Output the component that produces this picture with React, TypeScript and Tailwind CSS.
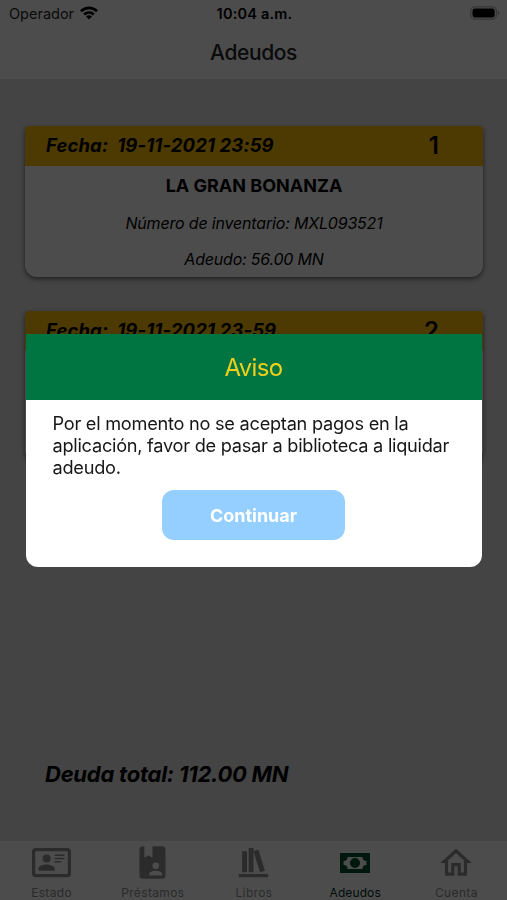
import { ReactNode } from "react"
import clsx from "clsx"

interface Debt {
  date: string
  title: string
  inventory: string
  amount: string
}

const debts: Debt[] = [
  { date: "19-11-2021 23:59", title: "LA GRAN BONANZA", inventory: "MXL093521", amount: "56.00" },
  { date: "19-11-2021 23-59", title: "LA GRAN BONANZA", inventory: "MXL093522", amount: "56.00" },
]

const tabs: { label: string; icon: ReactNode; active?: boolean }[] = [
  {
    label: "Estado",
    icon: (
      <svg viewBox="0 0 24 24" className="size-[39px]" fill="currentColor">
        <path d="M22 3H2C.91 3.04.04 3.91 0 5v14c.04 1.09.91 1.96 2 2h20c1.09-.04 1.96-.91 2-2V5c-.04-1.09-.91-1.96-2-2m0 16H2V5h20v14m-8-2v-1.25c0-1.66-3.34-2.5-5-2.5s-5 .84-5 2.5V17h10M9 7a2.5 2.5 0 1 0 0 5 2.5 2.5 0 0 0 0-5m5 0v1h6V7h-6m0 2v1h6V9h-6m0 2v1h4v-1h-4" />
      </svg>
    ),
  },
  {
    label: "Préstamos",
    icon: (
      <svg viewBox="0 0 24 24" className="size-[39px]" fill="currentColor" fillRule="evenodd">
        <path d="M18 2h-6v7L9.5 7.5 7 9V2H6a2 2 0 0 0-2 2v16a2 2 0 0 0 2 2h12a2 2 0 0 0 2-2V4a2 2 0 0 0-2-2m-4 10a2 2 0 1 1 0 4 2 2 0 0 1 0-4m4 8h-8v-1c0-1.33 2.67-2 4-2s4 .67 4 2v1z" />
      </svg>
    ),
  },
  {
    label: "Libros",
    icon: (
      <svg viewBox="0 0 24 24" className="size-[39px]" fill="currentColor">
        <path d="M9 3v15h3V3H9m3 2 4 13 3-1-4-13-3 1M5 5v13h3V5H5M3 19v2h18v-2H3z" />
      </svg>
    ),
  },
  {
    label: "Adeudos",
    active: true,
    icon: (
      <svg viewBox="0 0 30 20" className="h-5 w-[30px]" fill="currentColor" fillRule="evenodd">
        <path d="M0 0h30v20H0zM7.5 4a4 4 0 0 1-4 4v4a4 4 0 0 1 4 4h15a4 4 0 0 1 4-4V8a4 4 0 0 1-4-4zM15 5a5 5 0 1 1 0 10 5 5 0 0 1 0-10z" />
      </svg>
    ),
  },
  {
    label: "Cuenta",
    icon: (
      <svg viewBox="0 0 24 24" className="size-[38px]" fill="currentColor">
        <path d="m12 5.69 5 4.5V18h-2v-6H9v6H7v-7.81l5-4.5M12 3 2 12h3v8h6v-6h2v6h6v-8h3" />
      </svg>
    ),
  },
]

function StatusBar() {
  return (
    <div className="flex h-7 items-center justify-between pr-[7px] pl-[9px] text-[14.5px]">
      <div className="flex w-32 items-center gap-[6px] text-neutral-800">
        <span>Operador</span>
        <svg viewBox="0 0 18 14" className="h-3.5 w-[18px] -translate-y-px text-black" fill="none" stroke="currentColor" strokeWidth="2.7">
          <path d="M1 5.2a11.5 11.5 0 0 1 16 0M4.2 8.4a7 7 0 0 1 9.6 0" />
          <path d="M9 13.5 6 10.6a4.3 4.3 0 0 1 6 0z" fill="currentColor" stroke="none" />
        </svg>
      </div>
      <span className="font-semibold tracking-[0.2px]">10:04 a.m.</span>
      <div className="flex w-32 justify-end">
        <svg viewBox="0 0 30 14" className="h-3.5 w-[30px] -translate-y-px">
          <rect x="0.8" y="0.8" width="25.6" height="12.4" rx="4" fill="none" stroke="#b5b5b5" strokeWidth="1.2" />
          <rect x="2.5" y="2.5" width="22.2" height="9" rx="2.4" />
          <path d="M28 5v4c1.6-.8 1.6-3.2 0-4z" fill="#999" />
        </svg>
      </div>
    </div>
  )
}

function DebtCard({ debt, index }: { debt: Debt; index: number }) {
  return (
    <article className="h-[151px] overflow-hidden rounded-t-[4px] rounded-b-[12px] bg-white text-center shadow-[0_2px_5px_rgba(0,0,0,0.55)]">
      <header className="flex h-10 items-center justify-between bg-[#ffc107] pr-11 pl-[21px]">
        <p className="text-[18.5px] font-bold tracking-[0.12px] whitespace-pre italic">Fecha:  {debt.date}</p>
        <span className="text-[24px] font-semibold">{index}</span>
      </header>
      <h2 className="mt-[7px] text-[18px] leading-[26px] font-bold">{debt.title}</h2>
      <p className="mt-3 text-[16px] leading-6 tracking-[-0.18px] italic">Número de inventario: {debt.inventory}</p>
      <p className="mt-3 text-[16px] leading-6 tracking-[-0.2px] italic">Adeudo: {debt.amount} MN</p>
    </article>
  )
}

function NoticeDialog() {
  return (
    <div className="fixed inset-0 flex items-center justify-center bg-black/70">
      <div role="dialog" className="mt-px h-[233px] w-[456px] overflow-hidden rounded-b-[12px] bg-white">
        <h2 className="flex h-[66px] items-center justify-center bg-[#007542] pt-px text-[24px] tracking-[-0.7px] text-[#f0d01c]">
          Aviso
        </h2>
        <p className="mt-3 px-[27px] text-[18.2px] leading-[22px] tracking-[-0.26px] whitespace-nowrap text-neutral-900">
          Por el momento no se aceptan pagos en la<br />
          aplicación, favor de pasar a biblioteca a liquidar<br />
          adeudo.
        </p>
        <button className="mx-auto mt-3 flex h-[50px] w-[183px] items-center justify-center rounded-[12px] bg-[#94cfff] pt-px text-[18px] font-bold text-white">
          Continuar
        </button>
      </div>
    </div>
  )
}

export default function App() {
  return (
    <div className="flex h-[900px] w-[507px] flex-col overflow-hidden bg-[#e3e3e3] font-['Inter',sans-serif] text-black">
      <div className="h-[79px] bg-white">
        <StatusBar />
        <h1 className="text-center text-[21px] leading-[49px] font-medium tracking-[-0.4px] text-neutral-800">Adeudos</h1>
      </div>
      <main className="flex flex-1 flex-col pt-[47px] pr-6 pl-[25px]">
        <div className="flex flex-col gap-[34px]">
          {debts.map((debt, i) => (
            <DebtCard key={i} debt={debt} index={i + 1} />
          ))}
        </div>
        <p className="mt-auto mb-[52px] pl-5 text-[22px] leading-[30px] font-bold tracking-[-0.25px] italic">Deuda total: 112.00 MN</p>
      </main>
      <nav className="grid h-[59px] grid-cols-5 bg-white pl-px">
        {tabs.map((tab) => (
          <a key={tab.label} className={clsx("flex flex-col items-center", tab.active ? "text-[#004d30]" : "text-[#8f8f8f]")}>
            <span className="flex h-[43px] items-center">{tab.icon}</span>
            <span className={clsx("text-[12px] leading-[18px]", tab.active ? "tracking-[0.1px] text-[#00301e]" : "tracking-[0.35px]")}>
              {tab.label}
            </span>
          </a>
        ))}
      </nav>
      <NoticeDialog />
    </div>
  )
}
